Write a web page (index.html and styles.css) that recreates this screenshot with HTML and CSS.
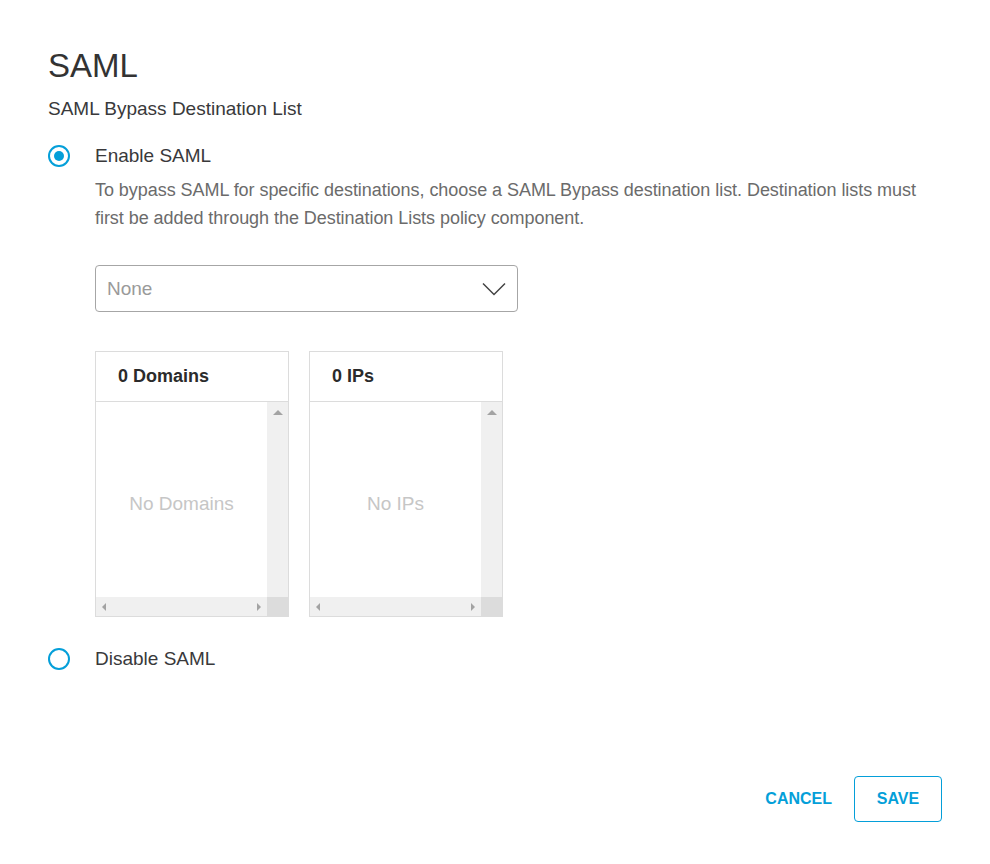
FILE: index.html
```html
<!DOCTYPE html>
<html>
<head>
<meta charset="utf-8">
<link rel="stylesheet" href="styles.css">
</head>
<body>
<div class="page">
  <h1 class="title">SAML</h1>
  <div class="subtitle">SAML Bypass Destination List</div>

  <div class="option">
    <span class="radio checked"></span>
    <span class="option-label">Enable SAML</span>
  </div>
  <div class="option-body">
    <p class="desc">To bypass SAML for specific destinations, choose a SAML Bypass destination list. Destination lists must first be added through the Destination Lists policy component.</p>
    <div class="select">
      <span class="placeholder">None</span>
      <svg class="chevron" width="24" height="14" viewBox="0 0 24 14"><path d="M1 1.5 L12 12.5 L23 1.5" fill="none" stroke="#444" stroke-width="1.5"/></svg>
    </div>
    <div class="panels">
      <div class="panel">
        <div class="panel-head">0 Domains</div>
        <div class="panel-body">
          <div class="panel-content">No Domains</div>
          <div class="vbar"><span class="arrow-up"></span></div>
          <div class="hbar"><span class="arrow-left"></span><span class="arrow-right"></span></div>
          <div class="corner"></div>
        </div>
      </div>
      <div class="panel">
        <div class="panel-head">0 IPs</div>
        <div class="panel-body">
          <div class="panel-content">No IPs</div>
          <div class="vbar"><span class="arrow-up"></span></div>
          <div class="hbar"><span class="arrow-left"></span><span class="arrow-right"></span></div>
          <div class="corner"></div>
        </div>
      </div>
    </div>
  </div>

  <div class="option option-disable">
    <span class="radio"></span>
    <span class="option-label">Disable SAML</span>
  </div>

  <div class="actions">
    <button class="btn-link">CANCEL</button>
    <button class="btn-outline">SAVE</button>
  </div>
</div>
</body>
</html>
```

FILE: styles.css
```css
* { box-sizing: border-box; }
html, body { margin: 0; padding: 0; background: #fff; }
body { font-family: "Liberation Sans", Arial, sans-serif; color: #39393b; }
.page { padding: 46px 48px 0 48px; width: 990px; height: 864px; }
.title { margin: 0; font-size: 33px; font-weight: 400; line-height: 40px; color: #333; }
.subtitle { margin-top: 12px; font-size: 19px; line-height: 22px; color: #39393b; }
.option { display: flex; align-items: center; margin-top: 24px; height: 24px; }
.radio { width: 22px; height: 22px; border: 2px solid #049fd9; border-radius: 50%; display: flex; align-items: center; justify-content: center; flex: none; }
.radio.checked::after { content: ""; width: 10px; height: 10px; border-radius: 50%; background: #049fd9; }
.option-label { margin-left: 25px; font-size: 19px; line-height: 24px; color: #39393b; }
.option-body { padding-left: 47px; }
.desc { margin: 8px 0 0 0; font-size: 18px; line-height: 28px; color: #6b6b6b; letter-spacing: -0.05px; }
.select { margin-top: 33px; width: 423px; height: 47px; border: 1px solid #a6a6a6; border-radius: 4px; display: flex; align-items: center; justify-content: space-between; padding: 0 11px 0 11px; }
.placeholder { font-size: 19px; color: #9a9a9a; }
.chevron { display: block; }
.panels { display: flex; gap: 20px; margin-top: 39px; }
.panel { width: 194px; height: 266px; border: 1px solid #dcdcdc; display: flex; flex-direction: column; }
.panel-head { height: 50px; flex: none; border-bottom: 1px solid #dcdcdc; padding-left: 22px; display: flex; align-items: center; font-size: 18px; font-weight: 700; color: #2b2b2b; }
.panel-body { flex: 1; display: grid; grid-template-columns: 1fr 21px; grid-template-rows: 1fr 19px; }
.panel-content { display: flex; align-items: center; justify-content: center; font-size: 19px; color: #c6c6c6; padding-top: 8px; }
.vbar { background: #f0f0f0; display: flex; justify-content: center; padding-top: 8px; }
.hbar { background: #f0f0f0; display: flex; justify-content: space-between; align-items: center; padding: 0 6px 0 6px; }
.corner { background: #dcdcdc; }
.arrow-up { width: 0; height: 0; border-left: 5px solid transparent; border-right: 5px solid transparent; border-bottom: 5px solid #a3a3a3; }
.arrow-left { width: 0; height: 0; border-top: 4px solid transparent; border-bottom: 4px solid transparent; border-right: 4px solid #a3a3a3; }
.arrow-right { width: 0; height: 0; border-top: 4px solid transparent; border-bottom: 4px solid transparent; border-left: 4px solid #a3a3a3; }
.option-disable { margin-top: 30px; }
.actions { display: flex; justify-content: flex-end; align-items: center; gap: 22px; margin-top: 105px; padding-right: 0; }
.btn-link { background: none; border: none; padding: 0; font-family: "Liberation Sans", Arial, sans-serif; font-size: 16px; font-weight: 700; color: #049fd9; }
.btn-outline { width: 88px; height: 46px; background: #fff; border: 1px solid #049fd9; border-radius: 4px; font-family: "Liberation Sans", Arial, sans-serif; font-size: 16px; font-weight: 700; color: #049fd9; }
```
